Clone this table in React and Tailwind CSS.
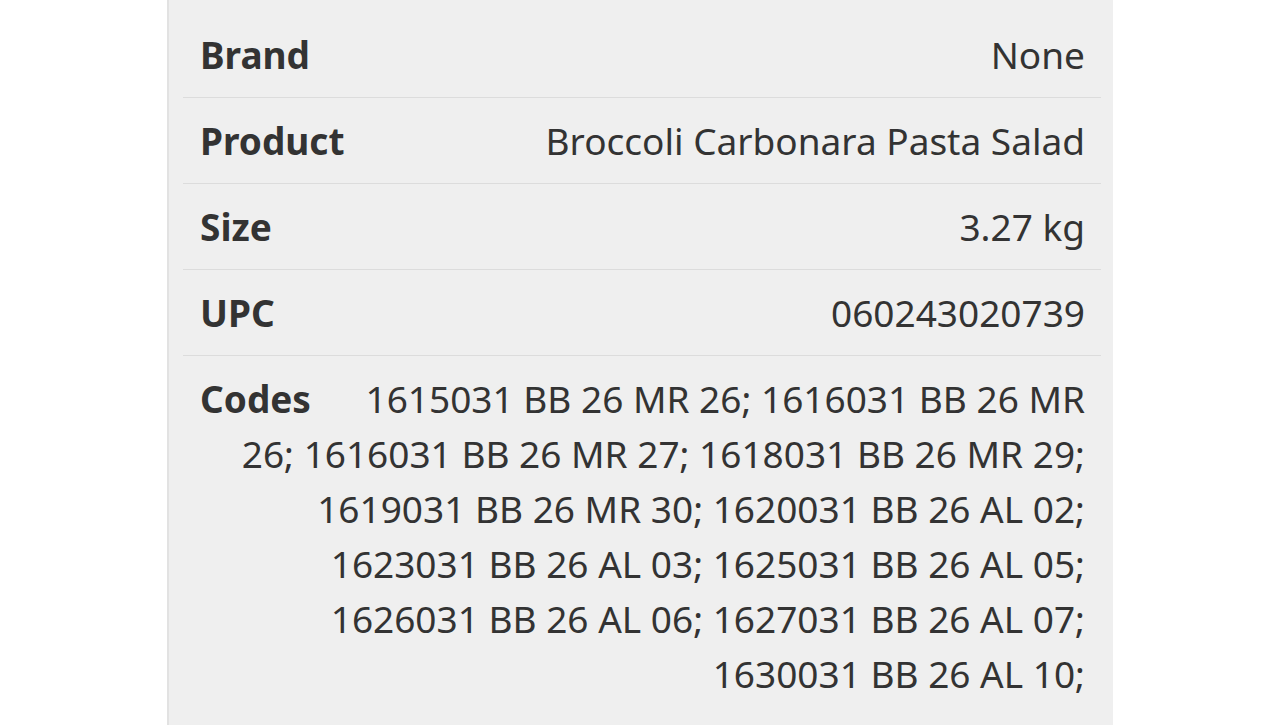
const ROWS = [
    { label: 'Brand', value: 'None' },
    { label: 'Product', value: 'Broccoli Carbonara Pasta Salad' },
    { label: 'Size', value: '3.27 kg' },
    { label: 'UPC', value: '060243020739' },
];

const CODES =
    '1615031 BB 26 MR 26; 1616031 BB 26 MR 26; 1616031 BB 26 MR 27; 1618031 BB 26 MR 29; 1619031 BB 26 MR 30; 1620031 BB 26 AL 02; 1623031 BB 26 AL 03; 1625031 BB 26 AL 05; 1626031 BB 26 AL 06; 1627031 BB 26 AL 07; 1630031 BB 26 AL 10;';

export default function App() {
    return (
        <div className="h-[725px] w-[1280px] overflow-hidden bg-white font-['Noto_Sans',sans-serif] text-[#333]">
            <div className="ml-[167px] h-full w-[946px] border-l-2 border-[#e2e2e2] bg-[#efefef] pl-[14px] pr-[12px] pt-[12px]">
                {ROWS.map((row) => (
                    <div
                        key={row.label}
                        className="flex items-center justify-between border-b border-[#dcdcdc] pl-[17px] pr-[16px] py-[15px] text-[37px] leading-[55px]"
                    >
                        <span className="font-bold">{row.label}</span>
                        <span>{row.value}</span>
                    </div>
                ))}

                {/* Codes wraps around the floated label */}
                <div className="pl-[17px] pr-[16px] py-[15px] text-right text-[37px] leading-[55px]">
                    <span className="float-left pr-[43px] font-bold">Codes</span>
                    {CODES}
                </div>
            </div>
        </div>
    );
}
